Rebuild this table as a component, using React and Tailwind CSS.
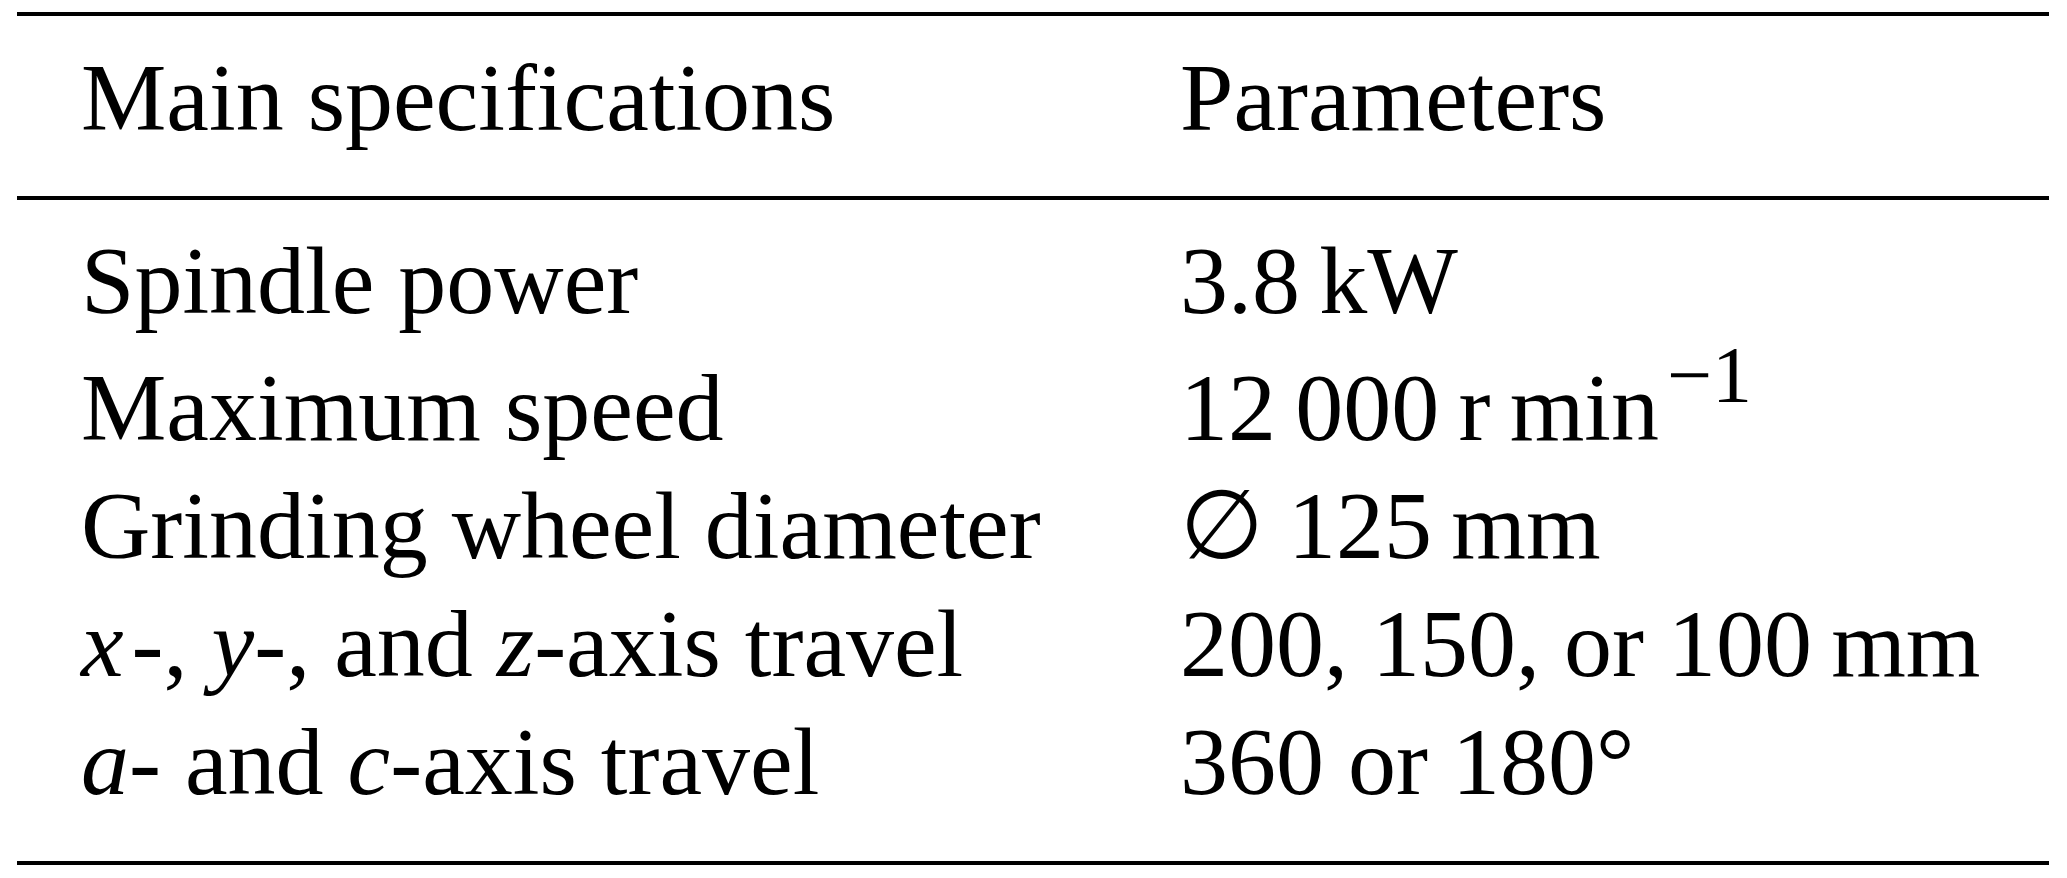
import React from "react";

const rows = [
  { spec: "Spindle power", value: "3.8\u2009kW" },
  {
    spec: "Maximum speed",
    value: (
      <>
        12{"\u2009"}000{"\u2009"}r{"\u2009"}min
        <span className="relative -top-[38px] ml-[8px] text-[80px] leading-none">{"\u22121"}</span>
      </>
    ),
    extra: "mt-[9px]",
  },
  { spec: "Grinding wheel diameter", value: "\u2205 125\u2009mm" },
  {
    spec: (
      <>
        <i>x</i>
        <span className="ml-[8px]">-, </span>
        <i>y</i>-, and <i>z</i>-axis travel
      </>
    ),
    value: "200, 150, or 100\u2009mm",
  },
  {
    spec: (
      <>
        <i>a</i>- and <i>c</i>-axis travel
      </>
    ),
    value: "360 or 180\u00b0",
  },
];

const Row = ({ spec, value, extra = "" }) => (
  <div className={`flex leading-[118px] ${extra}`}>
    <div className="w-[1163px] pl-[64px] whitespace-nowrap">{spec}</div>
    <div className="whitespace-nowrap">{value}</div>
  </div>
);

export default function App() {
  return (
    <div className="w-[2067px] h-[878px] bg-white text-black font-['Liberation_Serif','Times_New_Roman',serif] text-[96px] overflow-hidden">
      <div className="ml-[17px] pt-[12px] w-[2032px]">
        <div className="border-t-4 border-black pt-[23px] pb-[39px]">
          <Row spec="Main specifications" value="Parameters" />
        </div>
        <div className="border-t-4 border-b-4 border-black pt-[22px] pb-[40px]">
          {rows.map((r, i) => (
            <Row key={i} spec={r.spec} value={r.value} extra={r.extra} />
          ))}
        </div>
      </div>
    </div>
  );
}
